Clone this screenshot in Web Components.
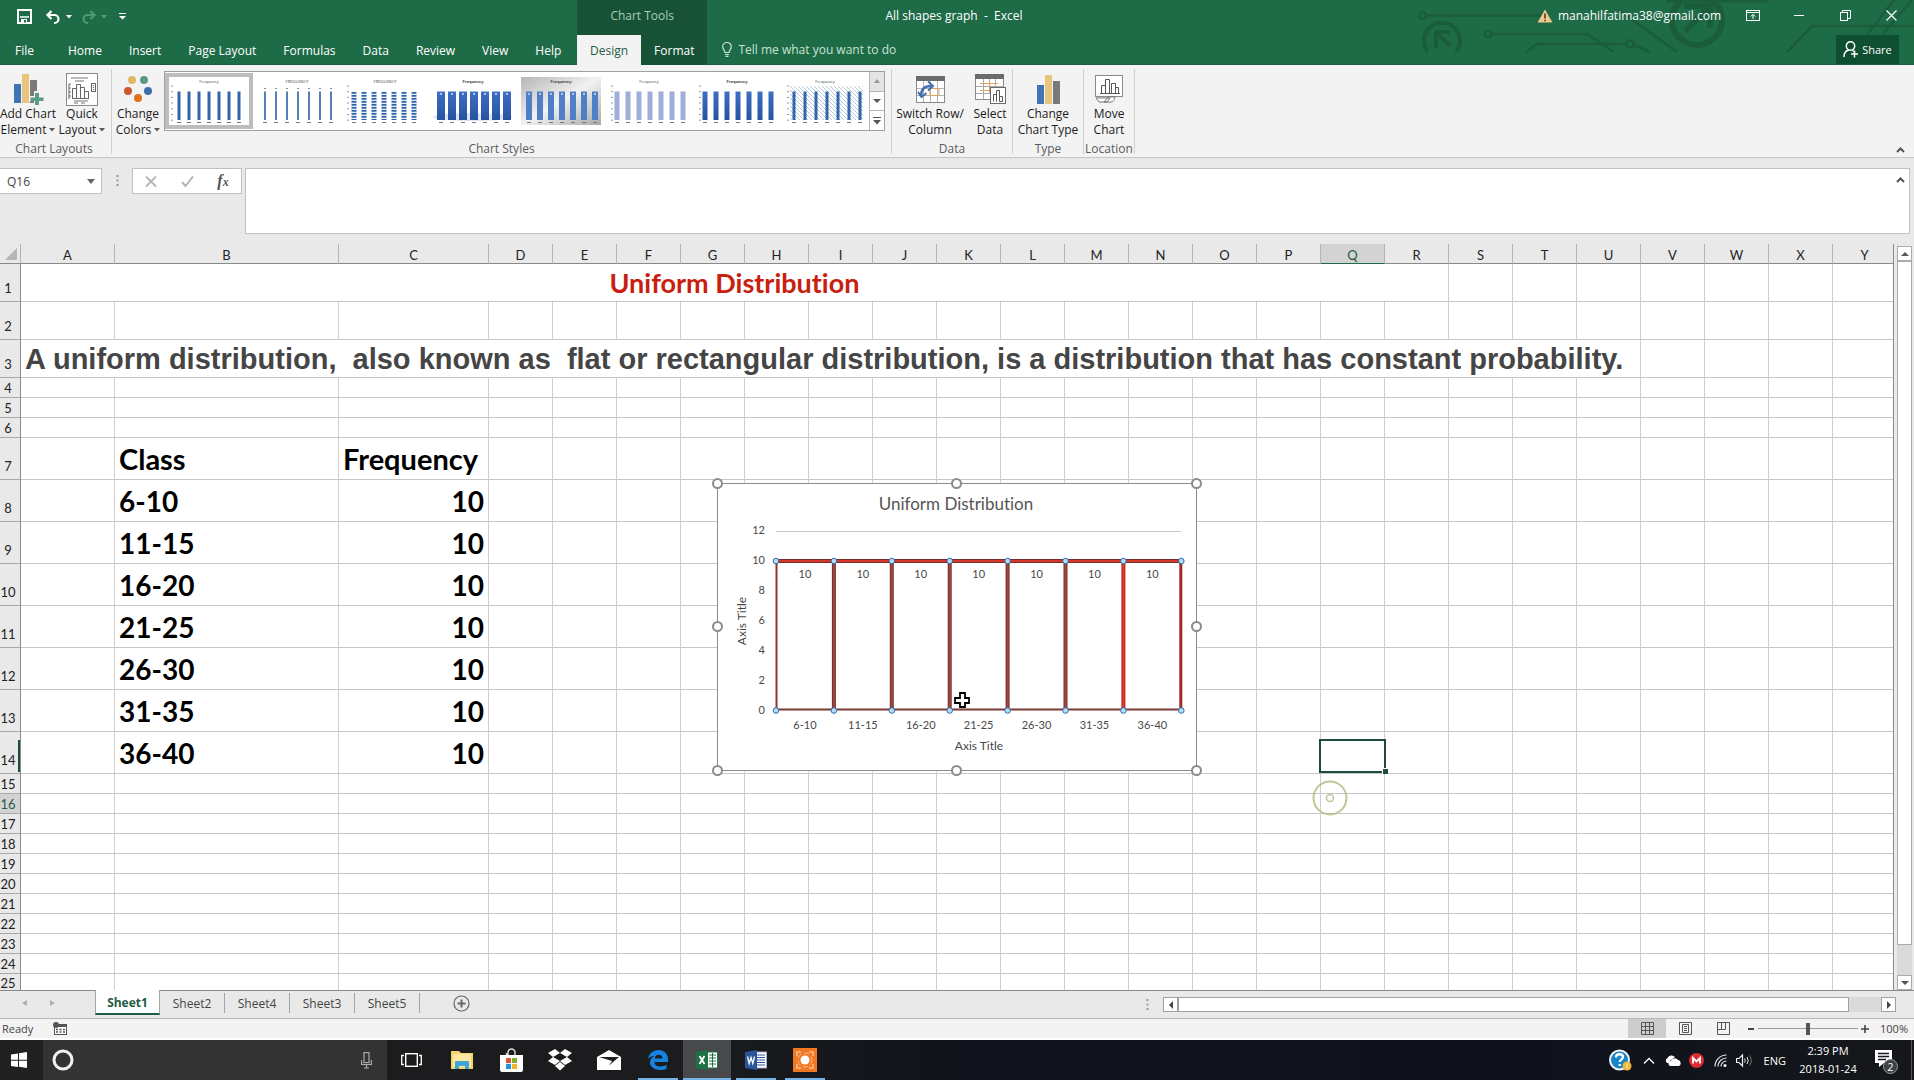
<!DOCTYPE html>
<html lang="en">
<head>
<meta charset="utf-8">
<title>All shapes graph - Excel</title>
<style>
  html, body { margin: 0; height: 100%; }
  body { font-family: "Open Sans", "Noto Sans", sans-serif; font-size: 12px; color: #262626; overflow: hidden; }
</style>
</head>
<body>
<excel-app></excel-app>

<script>
const BASE = `
  *, *::before, *::after { box-sizing: border-box; }
  button, input, textarea { font: inherit; color: inherit; margin: 0; padding: 0; border: 0; background: none; border-radius: 0; outline: 0; }
  button { display: flex; align-items: center; justify-content: center; }
  a { color: inherit; text-decoration: none; }
  svg { display: block; flex: none; overflow: visible; }
`;

function define(name, css, html, setup) {
  customElements.define(name, class extends HTMLElement {
    constructor() {
      super();
      this.attachShadow({ mode: 'open' });
    }
    connectedCallback() {
      if (this.shadowRoot.firstChild) return;
      const body = typeof html === 'function' ? html(this) : html;
      this.shadowRoot.innerHTML = `<style>${BASE}${css}</style>${body}`;
      if (setup) setup(this.shadowRoot, this);
    }
  });
}

const svg = (w, h, inner, extra = '') => `<svg width="${w}" height="${h}" viewBox="0 0 ${w} ${h}" fill="none" ${extra}>${inner}</svg>`;

const BARS = `<rect x="0" y="10" width="7" height="19" fill="#3f74b5"/><rect x="8" y="0" width="7" height="29" fill="#e8c47c"/><rect x="16" y="6" width="7" height="23" fill="#7a7a7a"/>`;

const ICONS = {
  save: svg(15, 15, '<path d="M1 1h13v13H1z" stroke="#fff" stroke-width="2"/><path d="M3 8h9" stroke="#fff" stroke-width="1.5"/><rect x="4" y="10" width="6" height="4" fill="#fff"/><rect x="7" y="11" width="2" height="2.5" fill="#1e6b47"/>'),
  undo: svg(15, 14, '<path d="M5.500 1L1.500 5l4 4M2 5h6.500a4 4 0 0 1 0 8H8" stroke="#fff" stroke-width="2.2"/>'),
  redo: svg(15, 14, '<path d="M9.500 1l4 4-4 4M13 5H6.500a4 4 0 0 0 0 8H7" stroke="#4f9a72" stroke-width="2.200"/>'),
  caretW: svg(6, 4, '<path d="M0 0h6L3 3.500z" fill="#fff"/>'),
  caretG: svg(6, 4, '<path d="M0 0h6L3 3.500z" fill="#5a9c78"/>'),
  caret: svg(6, 4, '<path d="M0 0h6L3 3.500z" fill="#5a5a5a"/>'),
  caretBig: svg(8, 5, '<path d="M0 0h8L4 5z" fill="#666"/>'),
  custom: svg(7, 7, '<path d="M0 .5h7" stroke="#fff"/><path d="M0 3h7L3.500 6.500z" fill="#fff"/>'),
  warn: svg(16, 14, '<path d="M8 0.500L15.500 13.500H.5z" fill="#f2c78c"/><path d="M8 4.500v5M8 10.700v1.600" stroke="#4a3a20" stroke-width="1.600"/>'),
  ribbonOpt: svg(14, 11, '<rect x=".5" y=".5" width="13" height="10" stroke="#fff"/><path d="M1 2.500h12M7 9V4.500M4.800 6.500L7 4.300l2.200 2.200" stroke="#fff"/>'),
  min: svg(10, 1, '<path d="M0 .5h10" stroke="#fff"/>'),
  restore: svg(11, 11, '<rect x=".5" y="2.500" width="7" height="8" stroke="#fff"/><path d="M2.500 2.500v-2h8v8h-3" stroke="#fff"/>'),
  close: svg(11, 11, '<path d="M.5.5l10 10M10.500.5l-10 10" stroke="#fff" stroke-width="1.200"/>'),
  share: svg(15, 17, '<circle cx="7.500" cy="5" r="4.200" stroke="#fff" stroke-width="1.500"/><path d="M1 16c0-4 2-6.500 5-7M9.500 9.500l2 1.500M11.500 9.500v7M8 13h7" stroke="#fff" stroke-width="1.500"/>'),
  bulb: svg(10, 15, '<path d="M3 10.500C3 8.500 .7 7.500.7 4.800a4.300 4.300 0 0 1 8.600 0C9.300 7.500 7 8.500 7 10.500zM3 12.500h4M3.500 14.300h3" stroke="#c9e2d4" stroke-width="1.200"/>'),
  addChart: svg(28, 31, BARS + '<path d="M20 17h5v5h5v5h-5v5h-5v-5h-5v-5h5z" fill="#f3f3f3"/><path d="M21 19h4v4.500h4.500v3.500H25v4h-4v-4h-4.500v-3.500H21z" fill="#5b9c86"/>'),
  quick: svg(32, 33, '<rect x=".5" y=".5" width="31" height="32" fill="#fff" stroke="#8a8a8a"/><path d="M5 5h17M9 8h9M8 28h14M3 11v15M8 30h4M15 30h4" stroke="#777" stroke-width="1.200"/><path d="M3 11h2M3 15h2M3 19h2M3 23h2" stroke="#777"/><path d="M6.500 25.500v-10h4v10M10.500 25.500v-14h4v14M14.500 25.500v-11h4v11M18.500 25.500v-7h4v7zM6 25.500h17" stroke="#666"/><rect x="25.500" y="10.500" width="4" height="8" stroke="#666"/><path d="M27 12.500h1M27 14.500h1M27 16.500h1" stroke="#666"/>'),
  colors: svg(28, 27, '<circle cx="8" cy="4" r="4" fill="#e3b566"/><circle cx="20" cy="4" r="4" fill="#5c9a85"/><circle cx="4" cy="15" r="4" fill="#c9582c"/><circle cx="24" cy="15" r="4" fill="#3e6fa8"/><circle cx="14" cy="22" r="4" fill="#e0711c"/>'),
  switchRC: svg(29, 27, '<rect x=".5" y=".5" width="28" height="26" fill="#fff" stroke="#8a8a8a"/><rect width="29" height="5" fill="#6b6b6b"/><path d="M1 12.500h27M1 19.500h27M7.500 5v21M14.500 5v21M21.500 5v21" stroke="#b5b5b5"/><path d="M14 12.500h9v7h-9z" stroke="#e0a060"/><path d="M5 20c0-7 4-10 10-10" stroke="#3f6fae" stroke-width="2.400"/><path d="M12 5.500l5 4.500-5 4.500M2 16l3.500 5 5-4" stroke="#3f6fae" stroke-width="2"/>'),
  selectData: svg(31, 30, '<rect x=".5" y=".5" width="28" height="25" fill="#fff" stroke="#8a8a8a"/><rect width="29" height="5" fill="#6b6b6b"/><path d="M1 12.500h27M1 19.500h27M8.500 5v20M20.500 5v20" stroke="#aaa"/><path d="M5 9.500h18M5 16.500h12M14.500 5v14" stroke="#e0a060"/><rect x="15.500" y="13.500" width="15" height="16" fill="#fff" stroke="#6b6b6b"/><path d="M18.500 27.500v-7h3v7M21.500 27.500v-11h3v11M24.500 27.500v-5h3v5z" stroke="#555"/>'),
  chartType: svg(23, 29, BARS),
  moveChart: svg(28, 28, '<rect x=".5" y=".5" width="27" height="21" fill="#fff" stroke="#8a8a8a"/><path d="M6.500 18.500v-8h4v8M10.500 18.500v-14h4v14M16.500 18.500v-10h4v10M20.500 18.500v-6h3v6zM5 18.500h20" stroke="#555"/><path d="M1 23l3 4h8l3-4zM15 22c-3 0-3 2-6 5h7c2 0 3-1 4-5z" fill="#fff" stroke="#777"/>'),
  chevUp: svg(9, 6, '<path d="M1 5l3.500-3.500L8 5" stroke="#555" stroke-width="2"/>'),
  cancel: svg(12, 11, '<path d="M1 .5l10 10M11 .5l-10 10" stroke="#b5b5b5" stroke-width="1.800"/>'),
  check: svg(13, 11, '<path d="M1 6l3.500 4L12 .5" stroke="#b5b5b5" stroke-width="2"/>'),
  dots: svg(3, 12, '<path d="M1.500 0v12" stroke="#999" stroke-width="2" stroke-dasharray="2 2.500"/>'),
  triUp: svg(8, 4, '<path d="M0 4h8L4 0z" fill="#555"/>'),
  triUpL: svg(6, 4, '<path d="M0 4h6L3 0z" fill="#999"/>'),
  triDown: svg(8, 4, '<path d="M0 0h8L4 4z" fill="#555"/>'),
  more: svg(8, 8, '<path d="M0 .5h8" stroke="#555"/><path d="M0 3h8L4 7.500z" fill="#555"/>'),
  triL: svg(4, 8, '<path d="M4 0v8L0 4z" fill="#444"/>'),
  triR: svg(4, 8, '<path d="M0 0v8l4-4z" fill="#444"/>'),
  navL: svg(5, 6, '<path d="M5 0v6L0 3z" fill="#b0b0b0"/>'),
  navR: svg(5, 6, '<path d="M0 0v6l5-3z" fill="#b0b0b0"/>'),
  plus: svg(17, 17, '<circle cx="8.500" cy="8.500" r="7.500" stroke="#666" stroke-width="1.200"/><path d="M8.500 4.500v8M4.500 8.500h8" stroke="#666" stroke-width="2"/>'),
  macro: svg(14, 13, '<rect x="1.500" y="3.500" width="12" height="9" fill="#fff" stroke="#555"/><path d="M1 3.500h13" stroke="#555" stroke-width="3"/><path d="M3 7.500h9M3 10h9" stroke="#555" stroke-dasharray="2 1.500" stroke-width="1.500"/><circle cx="3" cy="3" r="3" fill="#555"/>'),
  vNormal: svg(13, 13, '<path d="M.5.5h12v12H.5zM.5 4.500h12M.5 8.500h12M4.500.5v12M8.500.5v12" stroke="#555"/>'),
  vPage: svg(13, 13, '<path d="M.5.5h12v12H.5zM3.500 2.500h6v8h-6zM5 4.500h3M5 6.500h3M5 8.500h3" stroke="#555"/>'),
  vBreak: svg(13, 13, '<path d="M.5.5h12v12H.5zM4.500.5v7h4v-7M.5 7.500h4" stroke="#555"/>'),
  win: svg(16, 16, '<path d="M0 2.500l7-1v6.200H0zM8 1.300L16 0v7.700H8zM0 8.700h7v6.200l-7-1zM8 8.700h8V16l-8-1.200z" fill="#fff"/>'),
  ring: svg(22, 22, '<circle cx="11" cy="11" r="9" stroke="#f2f2f2" stroke-width="3"/>'),
  mic: svg(11, 17, '<rect x="3" y=".6" width="5" height="10" stroke="#aaa" stroke-width="1.200"/><path d="M.6 8v4.500h9.800V8M5.500 12.500v3.500M3 16h5" stroke="#aaa" stroke-width="1.200"/>'),
  taskview: svg(21, 14, '<rect x="4.700" y=".7" width="11.600" height="12.600" stroke="#fff" stroke-width="1.400"/><path d="M3 2.500H.7v9H3M18 2.500h2.300v9H18" stroke="#fff" stroke-width="1.300"/>'),
  explorer: svg(22, 18, '<path d="M0 0h8l2 2h12v16H0z" fill="#f5d36b"/><path d="M2 3h18v13H2z" fill="#ffe9a0"/><path d="M4 18v-7q0-1 1-1h12q1 0 1 1v7h-4v-3H8v3z" fill="#3fa5d8"/>'),
  store: svg(23, 23, '<path d="M8 7V3.500a3.500 3.500 0 0 1 7 0V7M6.500 7V4" stroke="#ddd" stroke-width="1.400"/><path d="M0 6h23v15q0 2-2 2H2q-2 0-2-2z" fill="#fff"/><path d="M6 9h5v5H6z" fill="#e2562d"/><path d="M12 9h5v5h-5z" fill="#7fb02c"/><path d="M6 15h5v5H6z" fill="#2494d8"/><path d="M12 15h5v5h-5z" fill="#f0b428"/>'),
  dropbox: svg(24, 22, '<path d="M7 0l5 4-7 4-5-4zM17 0l7 4-5 4-7-4zM5 8l7 4-5 4-7-4zM19 8l5 4-7 4-5-4zM7 17l5-4 5 4-5 4.500z" fill="#fff"/>'),
  mail: svg(24, 20, '<path d="M0 7l12-7 12 7v13H0z" fill="#fff"/><path d="M2 7h20l-10 8.500 3-4.500z" fill="#1c1d20"/>'),
  edge: svg(20, 20, '<path d="M0 9C1 3.500 5 0 10.500 0 16.500 0 20 4.500 20 9v3H6.500c0 3 2.500 4.500 6 4.500 2.300 0 4.300-.6 6-1.700v4C16.700 19.600 14.500 20 12 20 5.500 20 2 16 2 12.500 2 9.500 4 7 6.500 6 3.500 6 1.500 7.300 0 9zM6.700 8.500h7.800C14.500 6 13 4.700 10.700 4.700 8.500 4.700 7 6.200 6.700 8.500z" fill="#1683e0"/>'),
  excel: svg(22, 20, '<rect x="11" y="2" width="10.500" height="16" fill="#fff" stroke="#1e7145"/><path d="M13 5h7M13 8h7M13 11h7M13 14h7M16.500 3v14" stroke="#1e7145"/><path d="M0 2l12-2v20L0 18z" fill="#1e7145"/><path d="M3.500 6l5 8M8.500 6l-5 8" stroke="#fff" stroke-width="1.800"/>'),
  word: svg(22, 20, '<rect x="11" y="2" width="10.500" height="16" fill="#fff" stroke="#aac"/><path d="M12 5h8M12 7.500h8M12 10h8M12 12.500h8M12 15h8" stroke="#2a5699"/><path d="M0 2l12-2v20L0 18z" fill="#2a5699"/><path d="M2.500 6.500l1.700 7L6 7.500l1.800 6 1.700-7" stroke="#fff" stroke-width="1.300"/>'),
  orange: svg(24, 24, '<rect width="24" height="24" fill="#f07a24"/><path d="M4 8V4h4M16 4h4v4M4 16v4h4M20 16v4h-4" stroke="#ffb98a" stroke-width="1.600"/><circle cx="12" cy="12" r="7" stroke="#ffb98a" stroke-dasharray="5 3"/><circle cx="12" cy="12" r="4.500" fill="#fff"/>'),
  help: svg(22, 22, '<circle cx="10.500" cy="11" r="9.500" fill="#1784c8" stroke="#f0f0f0" stroke-width="2"/><path d="M7 8.500c0-4.500 7-4 7-.5 0 2.500-3.300 2.500-3.300 5M10.700 15v2" stroke="#fff" stroke-width="2.300"/><circle cx="18" cy="17" r="4.500" fill="#f0b93a"/><path d="M18 14.500v5" stroke="#fff0c0"/>'),
  chevW: svg(12, 7, '<path d="M1 6.500l5-5 5 5" stroke="#fff" stroke-width="1.300"/>'),
  cloud: svg(18, 11, '<path d="M3 8a3 3 0 0 1 .5-5A4.500 4.500 0 0 1 11 2L6.500 5.500 5 8z" fill="#fff"/><path d="M7 11a2.500 2.500 0 0 1 0-5 4 4 0 0 1 7-1 3.200 3.200 0 0 1 1 6z" fill="#fff"/>'),
  mega: svg(15, 15, '<circle cx="7.500" cy="7.500" r="7.500" fill="#dc2c34"/><path d="M4 10.500V5l3.500 3.500L11 5v5.500" stroke="#fff" stroke-width="1.800"/>'),
  wifi: svg(13, 13, '<path d="M1 12.500A11.500 11.500 0 0 1 12.500 1M4 12.500A8.500 8.500 0 0 1 12.500 4M7 12.500A5.500 5.500 0 0 1 12.500 7" stroke="#e8e8e8" stroke-width="1.200"/><circle cx="11" cy="11.500" r="1.500" fill="#fff"/>'),
  volume: svg(17, 13, '<path d="M.6 4.500h2.400L6.500 1v11L3 8.500H.6z" stroke="#eee" stroke-width="1.200"/><path d="M8.500 4.500q1.500 2 0 4M11 3q2.500 3.500 0 7" stroke="#eee"/><path d="M13.500 1.500q3.500 5 0 10" stroke="#777"/>'),
  note: svg(24, 25, '<path d="M0 0h17v13H9l-5 4v-4H0z" fill="#fff"/><path d="M3 3.500h11M3 6.500h11M3 9.500h8" stroke="#16181c" stroke-width="1.300"/><circle cx="15.500" cy="16.500" r="7" fill="#3c3f45" stroke="#999"/><text x="15.500" y="20.500" text-anchor="middle" font-family="Open Sans, sans-serif" font-size="11" fill="#fff">2</text>'),
};

/* One icon by name */
define('x-icon', ':host{display:block;flex:none}', el => ICONS[el.getAttribute('name')] || '');

/* ---------- Title bar and tabs ---------- */
define('excel-header', `
  :host { display: grid; grid-template-columns: auto auto 1fr; grid-template-rows: 35px 30px; position: relative; background: #1e6b47; color: #fff; height: 65px; }
  .art { position: absolute; right: 0; top: 0; }
  .qat { grid-column: 1; grid-row: 1; display: flex; align-items: center; padding: 0 0 2px 17px; }
  .qat .a { margin-left: 14px; } .qat .b { margin-left: 5px; } .qat .c { margin-left: 9px; } .qat .d { margin-left: 12px; }
  .ctx { grid-column: 2; grid-row: 1; background: #175237; color: #a6cfb9; display: flex; align-items: center; justify-content: center; padding-bottom: 4px; }
  .doc { grid-column: 1 / -1; grid-row: 1; justify-self: center; align-self: center; padding: 0 6px 4px 0; white-space: pre; pointer-events: none; }
  .win { grid-column: 3; grid-row: 1; justify-self: end; display: flex; align-items: center; position: relative; padding-bottom: 4px; }
  .win a { display: flex; gap: 5px; align-items: center; margin-right: 9px; }
  .win button { width: 46px; height: 30px; }
  nav { display: flex; }
  nav button { padding: 0 13px; height: 30px; }
  nav.main { grid-column: 1; grid-row: 2; gap: 1px; padding-left: 2px; width: 577px; box-shadow: inset 0 -1px #1c5c40; }
  nav.main button:first-child { padding-right: 20px; }
  nav.sub { grid-column: 2; grid-row: 2; background: #175237; }
  nav.sub .on { background: #f3f3f3; color: #1e5c43; }
  .tell { grid-column: 3; grid-row: 2; display: flex; justify-content: space-between; padding: 0 15px 1px; box-shadow: inset 0 -1px #1c5c40; }
  .tell button { gap: 6px; color: #c9e2d4; }
  .tell .share { position: relative; background: #0f4f31; color: #fff; width: 63px; gap: 4px; font-size: 11px; }
`, `
  <svg class="art" width="500" height="53" viewBox="1414 0 500 53" fill="none" stroke="#1a5c3c" stroke-width="2.500">
    <circle cx="1422.500" cy="15.500" r="3.500"/><path d="M1427 15.500H1544"/>
    <path d="M1428 52a18 18 0 1 1 28 0" stroke-width="4"/><path d="M1436 30v18M1436 32h14M1450 46l-12-12" stroke-width="4"/>
    <circle cx="1488" cy="34" r="3.500"/><path d="M1492 34h95l27 18M1526 52l11-8h89M1634 45l16 7M1619 10l58 42"/><circle cx="1630" cy="44" r="3.500"/>
    <circle cx="1697" cy="20" r="25" stroke-width="6"/><path d="M1684 6h26v22M1709 7l-24 24" stroke-width="6"/>
    <path d="M1666 1h103M1787 52l25-26h102M1867 35l27-35M1882 35l30-35"/>
  </svg>
  <div class="qat">
    <x-icon name="save"></x-icon><x-icon class="a" name="undo"></x-icon><x-icon class="b" name="caretW"></x-icon>
    <x-icon class="c" name="redo"></x-icon><x-icon class="b" name="caretG"></x-icon><x-icon class="d" name="custom"></x-icon>
  </div>
  <div class="ctx">Chart Tools</div>
  <div class="doc">All shapes graph  -  Excel</div>
  <div class="win">
    <a href="#"><x-icon name="warn"></x-icon>manahilfatima38@gmail.com</a>
    <button aria-label="Ribbon display options"><x-icon name="ribbonOpt"></x-icon></button>
    <button aria-label="Minimize"><x-icon name="min"></x-icon></button>
    <button aria-label="Restore"><x-icon name="restore"></x-icon></button>
    <button aria-label="Close"><x-icon name="close"></x-icon></button>
  </div>
  <nav class="main"><button>File</button><button>Home</button><button>Insert</button><button>Page Layout</button><button>Formulas</button><button>Data</button><button>Review</button><button>View</button><button>Help</button></nav>
  <nav class="sub"><button class="on">Design</button><button>Format</button></nav>
  <div class="tell"><button><x-icon name="bulb"></x-icon>Tell me what you want to do</button><button class="share"><x-icon name="share"></x-icon>Share</button></div>
`);

/* ---------- Ribbon ---------- */
define('ribbon-group', `
  :host { display: flex; flex-direction: column; border-right: 1px solid #d0d0d0; height: 85px; }
  .items { display: flex; flex: 1; }
  .name { text-align: center; color: #5c5c5c; line-height: 10px; }
`, el => `<div class="items"><slot></slot></div><div class="name">${el.getAttribute('label')}</div>`);

define('ribbon-button', `
  :host { display: block; }
  button { flex-direction: column; justify-content: flex-start; width: 100%; line-height: 16px; padding-top: 3px; color: #1c1c1c; }
  .pic { height: 34px; display: flex; align-items: center; }
  .l { display: flex; align-items: center; gap: 3px; white-space: nowrap; }
`, el => `<button><span class="pic"><x-icon name="${el.getAttribute('icon')}"></x-icon></span><span class="l">${el.getAttribute('one')}</span><span class="l">${el.getAttribute('two')}${el.hasAttribute('menu') ? '<x-icon name="caret"></x-icon>' : ''}</span></button>`);

const THUMBS = {
  1: { w: 3, fill: '#3465a8', x: 10, step: 10, ticks: 1 },
  2: { w: 2, fill: '#5580b5', x: 8, step: 11, caps: 1, upper: 1 },
  3: { w: 5, fill: 'url(#stripe)', x: 9, step: 10, ticks: 1, upper: 1 },
  4: { w: 8, fill: 'url(#deep)', x: 8, step: 11, inner: 1, glow: 1, bold: 1 },
  5: { w: 6, fill: '#4f7fc6', x: 8, step: 11, inner: 1, grey: 1, bold: 1 },
  6: { w: 5, fill: '#9fadd9', x: 8, step: 11, ticks: 1 },
  7: { w: 5, fill: 'url(#deep)', x: 8, step: 11, ticks: 1, bold: 1 },
  8: { w: 3, fill: '#3465a8', x: 9, step: 11, ticks: 1, hatch: 1 },
};
define('chart-thumb', `
  :host { display: block; padding: 4px; width: 88px; height: 56px; }
  :host([selected]) { background: #bdbdbd; }
`, el => {
  const t = THUMBS[el.getAttribute('kind')];
  let s = `<defs><pattern id="stripe" width="80" height="3" patternUnits="userSpaceOnUse"><rect width="80" height="3" fill="#dfe8f4"/><rect width="80" height="1.700" fill="#2f64a8"/></pattern>
    <linearGradient id="deep" x1="0" y1="0" x2="0" y2="1"><stop offset="0" stop-color="#3f6fc4"/><stop offset="1" stop-color="#2553a0"/></linearGradient>
    <linearGradient id="grey" x1="0" y1="0" x2="1" y2="1"><stop offset="0" stop-color="#b5b5b5"/><stop offset=".5" stop-color="#f2f2f2"/><stop offset="1" stop-color="#a8a8a8"/></linearGradient>
    <pattern id="hatch" width="4" height="4" patternUnits="userSpaceOnUse"><path d="M0 0l4 4" stroke="#9fbcd2" stroke-width=".8"/></pattern></defs>
    <rect width="80" height="48" fill="${t.grey ? 'url(#grey)' : '#fff'}"/>`;
  if (t.hatch) s += '<rect x="5" y="9" width="73" height="34" fill="url(#hatch)"/>';
  if (t.glow) s += '<ellipse cx="40" cy="40" rx="40" ry="4" fill="#dfe4f2"/>';
  s += `<text x="40" y="6" text-anchor="middle" font-size="4" fill="#444" font-family="Open Sans, sans-serif" ${t.bold ? 'font-weight="700"' : ''}>${t.upper ? 'FREQUENCY' : 'Frequency'}</text>`;
  for (let i = 0; i < 7; i++) {
    const x = t.x + i * t.step;
    s += `<rect x="${x - t.w / 2}" y="14.500" width="${t.w}" height="28.500" fill="${t.fill}"/><path d="M${x - 2} 45.500h4" stroke="#777" stroke-width="1"/>`;
    if (t.inner) s += `<path d="M${x - 1} 17h2" stroke="#cfe0f5" stroke-width="1.500"/>`;
    if (t.caps) s += `<path d="M${x - 1} 11.500h2" stroke="#888"/>`;
  }
  if (t.ticks) for (let y = 9; y < 46; y += 5.700) s += `<path d="M2 ${y}h2" stroke="#999"/>`;
  return svg(80, 48, s);
});

define('excel-ribbon', `
  :host { display: flex; background: #f3f3f3; height: 93px; border-bottom: 1px solid #c6c6c6; padding-top: 4px; }
  .w56 { width: 56px; } .w52 { width: 52px; } .w76 { width: 76px; } .w44 { width: 44px; } .w70 { width: 70px; } .w50 { width: 50px; }
  .first { padding-right: 3px; }
  .gallery { display: flex; border: 1px solid #a0a0a0; height: 60px; margin-top: 2px; background: #fff; padding-top: 1px; }
  .gallery .strip { display: flex; width: 704px; overflow: hidden; }
  .gallery .nav { display: flex; flex-direction: column; border-left: 1px solid #b5b5b5; width: 15px; margin-top: -1px; }
  .nav button { flex: 1; border-bottom: 1px solid #b5b5b5; }
  .nav button:first-child { background: #e4e4e4; } .nav button:last-child { border: 0; }
  .fill { flex: 1; display: flex; align-items: flex-end; justify-content: flex-end; padding: 0 9px 4px; }
  .styles { padding-right: 6px; display: flex; }
`, `
  <ribbon-group class="first" label="Chart Layouts"><ribbon-button class="w56" icon="addChart" one="Add Chart" two="Element" menu></ribbon-button><ribbon-button class="w52" icon="quick" one="Quick" two="Layout" menu></ribbon-button></ribbon-group>
  <ribbon-group label="Chart Styles"><ribbon-button class="w52" icon="colors" one="Change" two="Colors" menu></ribbon-button>
    <div class="styles"><div class="gallery"><div class="strip"><chart-thumb kind="1" selected></chart-thumb>${[2,3,4,5,6,7,8].map(k => `<chart-thumb kind="${k}"></chart-thumb>`).join('')}</div>
    <div class="nav"><button aria-label="Previous"><x-icon name="triUpL"></x-icon></button><button aria-label="Next"><x-icon name="triDown"></x-icon></button><button aria-label="More"><x-icon name="more"></x-icon></button></div></div></div></ribbon-group>
  <ribbon-group label="Data"><ribbon-button class="w76" icon="switchRC" one="Switch Row/" two="Column"></ribbon-button><ribbon-button class="w44" icon="selectData" one="Select" two="Data"></ribbon-button></ribbon-group>
  <ribbon-group label="Type"><ribbon-button class="w70" icon="chartType" one="Change" two="Chart Type"></ribbon-button></ribbon-group>
  <ribbon-group label="Location"><ribbon-button class="w50" icon="moveChart" one="Move" two="Chart"></ribbon-button></ribbon-group>
  <div class="fill"><button aria-label="Collapse the ribbon"><x-icon name="chevUp"></x-icon></button></div>
`);

/* ---------- Formula bar ---------- */
define('formula-bar', `
  :host { display: flex; align-items: flex-start; background: #e9e9e9; height: 86px; padding: 10px 4px 0 0; }
  .box { display: flex; align-items: center; border: 1px solid #c0c0c0; background: #fff; height: 26px; }
  .name { width: 102px; border-left: 0; }
  .name input { width: 80px; padding-left: 7px; color: #444; }
  .name button { flex: 1; height: 24px; }
  .grip { height: 26px; width: 30px; display: flex; align-items: center; justify-content: center; }
  .ops { width: 110px; margin-right: 3px; }
  .ops button { flex: 1; height: 24px; }
  i { font-family: "Liberation Serif", serif; font-size: 16px; color: #555; font-weight: 700; line-height: 20px; }
  i small { font-size: 12px; }
  .text { flex: 1; height: 66px; align-items: flex-start; }
  textarea { flex: 1; height: 64px; resize: none; padding: 4px; }
  .text button { padding: 8px 4px 0 0; }
`, `
  <div class="box name"><input aria-label="Name box" value="Q16"><button aria-label="Name list"><x-icon name="caretBig"></x-icon></button></div>
  <div class="grip"><x-icon name="dots"></x-icon></div>
  <div class="box ops"><button aria-label="Cancel"><x-icon name="cancel"></x-icon></button><button aria-label="Enter"><x-icon name="check"></x-icon></button><button aria-label="Insert function"><i>f<small>x</small></i></button></div>
  <div class="box text"><textarea aria-label="Formula bar"></textarea><button aria-label="Collapse formula bar"><x-icon name="chevUp"></x-icon></button></div>
`);

/* ---------- Embedded chart ---------- */
define('uniform-chart', `
  :host { display: block; width: 480px; height: 288px; background: #fff; border: 1px solid #8c8c8c; }
  svg { margin: -1px; }
  text { font-family: Lato, sans-serif; font-size: 11px; fill: #484848; font-variant-ligatures: none; }
  .t { font-size: 17px; fill: #555; }
  .s { font-size: 12px; }
`, () => {
  const x0 = 59, step = 57.9, top = 78, bottom = 227, end = x0 + 7 * step;
  let s = `<text class="t" x="239" y="27" text-anchor="middle">Uniform Distribution</text>
    <path d="M59 48.500h405" stroke="#c8c8c8"/>`;
  for (let v = 0; v <= 12; v += 2) s += `<text x="48" y="${Math.round(231 - v * 15)}" text-anchor="end">${v}</text>`;
  s += `<path d="M${x0} 226.500H${end}" stroke="#7b3a33" stroke-width="2"/>`;
  for (let i = 0; i < 8; i++) {
    const x = x0 + i * step;
    if (i === 0 || i === 7) s += `<path d="M${x + (i ? -.5 : .5)} ${top}V${bottom}" stroke="${i ? '#a02a22' : '#8c352c'}" stroke-width="${i ? 3 : 2}"/>`;
    else s += `<path d="M${x} ${top}V${bottom}" stroke="${i === 6 ? '#b3261d' : '#7a2f28'}" stroke-width="4"/><path d="M${x} ${top}V${bottom}" stroke="${i === 6 ? '#e0382c' : '#9a4a42'}" stroke-width="2"/>`;
  }
  s += `<path d="M${x0} ${top}H${end}" stroke="#7c2c26" stroke-width="4"/><path d="M${x0} ${top}H${end}" stroke="#d4372c" stroke-width="2"/>`;
  ['6-10', '11-15', '16-20', '21-25', '26-30', '31-35', '36-40'].forEach((l, i) => {
    const c = x0 + (i + .5) * step;
    s += `<text x="${c}" y="95" text-anchor="middle">10</text><text x="${c}" y="246" text-anchor="middle">${l}</text>`;
  });
  for (let i = 0; i < 8; i++) for (const y of [78, 227.500]) s += `<circle cx="${x0 + i * step}" cy="${y}" r="2.800" fill="#b5dcf7" stroke="#2a6ca6"/>`;
  s += `<text x="262" y="267" text-anchor="middle" class="s">Axis Title</text>
    <text class="s" transform="translate(29 138) rotate(-90)" text-anchor="middle">Axis Title</text>`;
  for (const [x, y] of [[0, 0], [239, 0], [479, 0], [0, 143], [479, 143], [0, 287], [239, 287], [479, 287]])
    s += `<circle cx="${x + .5}" cy="${y + .5}" r="4.500" fill="#fff" stroke="#8c8c8c" stroke-width="2"/>`;
  return svg(480, 288, s);
});

/* ---------- Worksheet ---------- */
define('work-sheet', `
  :host { display: flex; flex: 1; min-height: 0; background: #e9e9e9; }
  .view { flex: 1; min-width: 0; position: relative; overflow: hidden; background: #fff; border-right: 1px solid #8a8a8a; }
  table { border-collapse: separate; border-spacing: 0; table-layout: fixed; width: 1897px; font-family: Lato, sans-serif; font-variant-ligatures: none; }
  th { background: #e9e9e9; font-weight: 400; font-size: 13px; line-height: 16px; color: #222; padding: 0; border-right: 1px solid #b4b4b4; border-bottom: 1px solid #8a8a8a; }
  thead th { height: 20px; padding-top: 2px; }
  tbody th { border-right-color: #8a8a8a; border-bottom-color: #a8a8a8; vertical-align: bottom; padding: 0 4px 1px 0; }
  tbody tr.tall th { padding-bottom: 5px; }
  tbody tr.last th { line-height: 14px; padding: 2px 4px 0 0; border-bottom: 0; }
  .sel { background: #d3d3d3; color: #1e5c43; }
  thead .sel { border-bottom-color: #1e6b47; }
  td { border-right: 1px solid #cfcfcf; border-bottom: 1px solid #c6c6c6; padding: 0 4px 3px; vertical-align: bottom; font-weight: 700; font-size: 28px; line-height: 34px; color: #000; white-space: pre; }
  .last td { border-bottom: 0; }
  td.n { text-align: right; }
  td.head { font-size: 29px; }
  td.title { text-align: center; color: #c8200f; font-size: 27px; line-height: 32px; padding-bottom: 2px; }
  td.note { font-family: "Liberation Sans", sans-serif; font-size: 29px; line-height: 33px; color: #454545; padding-bottom: 1px; }
  uniform-chart { position: absolute; left: 717px; top: 239px; }
  .cursor { position: absolute; left: 954px; top: 448px; }
  .cell { position: absolute; left: 1319px; top: 495px; width: 67px; height: 34px; border: 2px solid #1e4d40; }
  .cell::after { content: ""; position: absolute; right: -4px; bottom: -3px; width: 6px; height: 6px; background: #1e4d40; border: solid #fff; border-width: 1px 0 0 1px; }
  .click { position: absolute; left: 1312px; top: 536px; }
  .mark { position: absolute; left: 18px; top: 496px; width: 2px; height: 32px; background: #1e4d40; }
  .bar { width: 20px; display: flex; flex-direction: column; padding: 2px 2px 0 3px; }
  .bar button { height: 15px; background: #fff; border: 1px solid #ababab; }
  .thumb { flex: 0 1 684px; background: #fff; border: 1px solid #ababab; }
  .track { flex: 1; background: #dadada; }
`, () => {
  const letters = 'ABCDEFGHIJKLMNOPQRSTUVWXY'.split('');
  const widths = [94, 224, 150];
  let h = '<div class="view"><table><colgroup><col style="width:21px">';
  letters.forEach((_, i) => h += `<col style="width:${widths[i] || 64}px">`);
  h += `</colgroup><thead><tr><th>${svg(20, 16, '<path d="M17 1v12H5z" fill="#b5b5b5"/>')}</th>`;
  letters.forEach(l => h += `<th${l === 'Q' ? ' class="sel"' : ''}>${l}</th>`);
  h += '</tr></thead><tbody>';
  const data = ['6-10', '11-15', '16-20', '21-25', '26-30', '31-35', '36-40'];
  for (let r = 1; r <= 25; r++) {
    const tall = r <= 3 || (r >= 7 && r <= 14);
    const ht = r <= 3 ? 38 : tall ? 42 : r === 25 ? 16 : 20;
    h += `<tr style="height:${ht}px" class="${tall ? 'tall' : r === 25 ? 'last' : ''}"><th${r === 16 ? ' class="sel"' : ''}>${r}</th>`;
    if (r === 1) h += '<td class="title" colspan="18">Uniform Distribution</td>' + '<td></td>'.repeat(7);
    else if (r === 3) h += '<td class="note" colspan="21">A uniform distribution,  also known as  flat or rectangular distribution, is a distribution that has constant probability.</td>' + '<td></td>'.repeat(4);
    else if (r === 7) h += '<td></td><td class="head">Class</td><td class="head">Frequency</td>' + '<td></td>'.repeat(22);
    else if (r > 7 && r < 15) h += `<td></td><td>${data[r - 8]}</td><td class="n">10</td>` + '<td></td>'.repeat(22);
    else h += '<td></td>'.repeat(25);
    h += '</tr>';
  }
  h += `</tbody></table><div class="mark"></div><div class="cell"></div>
    <svg class="click" width="36" height="36" fill="none" stroke="#b4b67c" stroke-opacity=".8"><circle cx="18" cy="18" r="16.500" stroke-width="2"/><circle cx="18" cy="18" r="3.500" stroke-width="1.500"/></svg>
    <uniform-chart></uniform-chart>
    <svg class="cursor" width="16" height="16"><path d="M6 1h5v5h4v5h-4v4H6v-4H1V6h5z" fill="#fff" stroke="#000" stroke-width="1.800"/></svg>
  </div>
  <div class="bar"><button aria-label="Scroll up"><x-icon name="triUp"></x-icon></button><div class="thumb"></div><div class="track"></div><button aria-label="Scroll down"><x-icon name="triDown"></x-icon></button></div>`;
  return h;
});

/* ---------- Sheet tabs ---------- */
define('sheet-tabs', `
  :host { display: flex; background: #e9e9e9; height: 28px; border-top: 1px solid #8a8a8a; }
  .nav { width: 95px; display: flex; align-items: center; justify-content: center; gap: 23px; padding: 0 19px 3px 0; }
  .tabs { display: flex; }
  .tabs button { width: 65px; height: 20px; margin-top: 2px; border-right: 1px solid #a5a5a5; color: #444; }
  .tabs .on { height: 25px; margin-top: -1px; padding-top: 2px; background: #fff; font-weight: 700; color: #1e5c43; border: 1px solid #a5a5a5; border-width: 0 1px 2px; border-bottom-color: #1e5c43; }
  .add { width: 82px; height: 25px; }
  .space { flex: 1; }
  .h { display: flex; width: 768px; padding: 6px 18px 6px 0; align-items: stretch; }
  .h button { width: 15px; background: #fff; border: 1px solid #a0a0a0; }
  .h .g { padding-right: 14px; display: flex; align-items: center; }
  .thumb { flex: 1; background: #fff; border: 1px solid #a0a0a0; }
  .track { width: 32px; background: #dadada; }
`, `
  <div class="nav"><x-icon name="navL"></x-icon><x-icon name="navR"></x-icon></div>
  <div class="tabs"><button class="on">Sheet1</button><button>Sheet2</button><button>Sheet4</button><button>Sheet3</button><button>Sheet5</button></div>
  <button class="add" aria-label="New sheet"><x-icon name="plus"></x-icon></button>
  <div class="space"></div>
  <div class="h"><div class="g"><x-icon name="dots"></x-icon></div><button aria-label="Scroll left"><x-icon name="triL"></x-icon></button><div class="thumb"></div><div class="track"></div><button aria-label="Scroll right"><x-icon name="triR"></x-icon></button></div>
`);

/* ---------- Status bar ---------- */
define('status-bar', `
  :host { display: flex; align-items: center; height: 22px; background: #f3f3f3; border-top: 1px solid #b8b8b8; border-bottom: 2px solid #fff; font-size: 11px; color: #444; padding: 0 6px 0 2px; }
  .mac { margin-left: 20px; }
  .space { flex: 1; }
  .v { width: 38px; height: 19px; } .v.on { background: #cdcdcd; }
  .z { width: 14px; height: 19px; }
  .zoom { display: flex; align-items: center; margin-left: 2px; }
  input { appearance: none; width: 100px; height: 19px; background: linear-gradient(#999, #999) center / 100% 1px no-repeat; }
  input::-webkit-slider-thumb { appearance: none; width: 4px; height: 12px; background: #555; }
  .pc { margin-left: 8px; }
`, `
  <span>Ready</span><x-icon class="mac" name="macro"></x-icon><div class="space"></div>
  <button class="v on" aria-label="Normal"><x-icon name="vNormal"></x-icon></button><button class="v" aria-label="Page layout"><x-icon name="vPage"></x-icon></button><button class="v" aria-label="Page break preview"><x-icon name="vBreak"></x-icon></button>
  <div class="zoom"><button class="z" aria-label="Zoom out">${svg(6, 2, '<path d="M0 1h6" stroke="#444" stroke-width="2"/>')}</button><input type="range" aria-label="Zoom" min="0" max="100" value="50"><button class="z" aria-label="Zoom in">${svg(8, 8, '<path d="M0 4h8M4 0v8" stroke="#444" stroke-width="1.600"/>')}</button></div>
  <span class="pc">100%</span>
`);

/* ---------- Windows taskbar ---------- */
define('task-button', `
  :host { display: block; width: 48px; height: 40px; margin-right: 1px; }
  button { width: 48px; height: 40px; position: relative; }
  :host([active]) button { background: #47494b; }
  :host([open]) button::after { content: ""; position: absolute; left: 4px; right: 4px; bottom: 0; height: 2px; background: #76b4e8; }
  :host([active]) button::after { left: 0; right: 0; }
`, el => `<button aria-label="${el.getAttribute('label')}"><x-icon name="${el.getAttribute('icon')}"></x-icon></button>`);

define('win-taskbar', `
  :host { display: flex; align-items: stretch; height: 40px; background: linear-gradient(90deg, #1c1c1d 0, #1b1c1e 36%, #10131b 50%, #0f121b 80%, #15171b); color: #fff; font-size: 11px; }
  .start { width: 43px; padding-right: 5px; background: #202020; }
  .search { width: 344px; background: #333; display: flex; align-items: center; justify-content: space-between; padding: 0 15px 0 9px; }
  .search input { flex: 1; height: 30px; min-width: 0; }
  .apps { display: flex; padding-left: 2px; }
  .space { flex: 1; }
  .tray { display: flex; align-items: center; }
  .i { width: 24px; display: flex; justify-content: center; }
  .lang { margin: 0 13px 0 7px; }
  .clock { text-align: center; line-height: 18px; width: 58px; margin-right: 18px; }
  .note { padding-top: 4px; margin-right: 12px; }
  .desk { width: 3px; border-left: 1px solid #555; height: 40px; }
`, `
  <button class="start" aria-label="Start"><x-icon name="win"></x-icon></button>
  <div class="search"><x-icon name="ring"></x-icon><input aria-label="Search"><x-icon name="mic"></x-icon></div>
  <task-button icon="taskview" label="Task view"></task-button>
  <div class="apps">
    <task-button icon="explorer" label="File Explorer"></task-button>
    <task-button icon="store" label="Store"></task-button>
    <task-button icon="dropbox" label="Dropbox"></task-button>
    <task-button icon="mail" label="Mail"></task-button>
    <task-button icon="edge" label="Edge" open></task-button>
    <task-button icon="excel" label="Excel" open active></task-button>
    <task-button icon="word" label="Word" open></task-button>
    <task-button icon="orange" label="Recorder" open></task-button>
  </div>
  <div class="space"></div>
  <div class="tray"><x-icon name="help"></x-icon><span style="width:6px"></span>
    <span class="i"><x-icon name="chevW"></x-icon></span><span class="i"><x-icon name="cloud"></x-icon></span><span class="i"><x-icon name="mega"></x-icon></span><span class="i"><x-icon name="wifi"></x-icon></span><span class="i"><x-icon name="volume"></x-icon></span>
    <span class="lang">ENG</span><div class="clock">2:39 PM<br>2018-01-24</div><x-icon class="note" name="note"></x-icon><div class="desk"></div></div>
`);

define('excel-app', `
  :host { display: flex; flex-direction: column; height: 100vh; min-height: 600px; }
`, `
  <excel-header></excel-header>
  <excel-ribbon></excel-ribbon>
  <formula-bar></formula-bar>
  <work-sheet></work-sheet>
  <sheet-tabs></sheet-tabs>
  <status-bar></status-bar>
  <win-taskbar></win-taskbar>
`);
</script>
</body>
</html>
